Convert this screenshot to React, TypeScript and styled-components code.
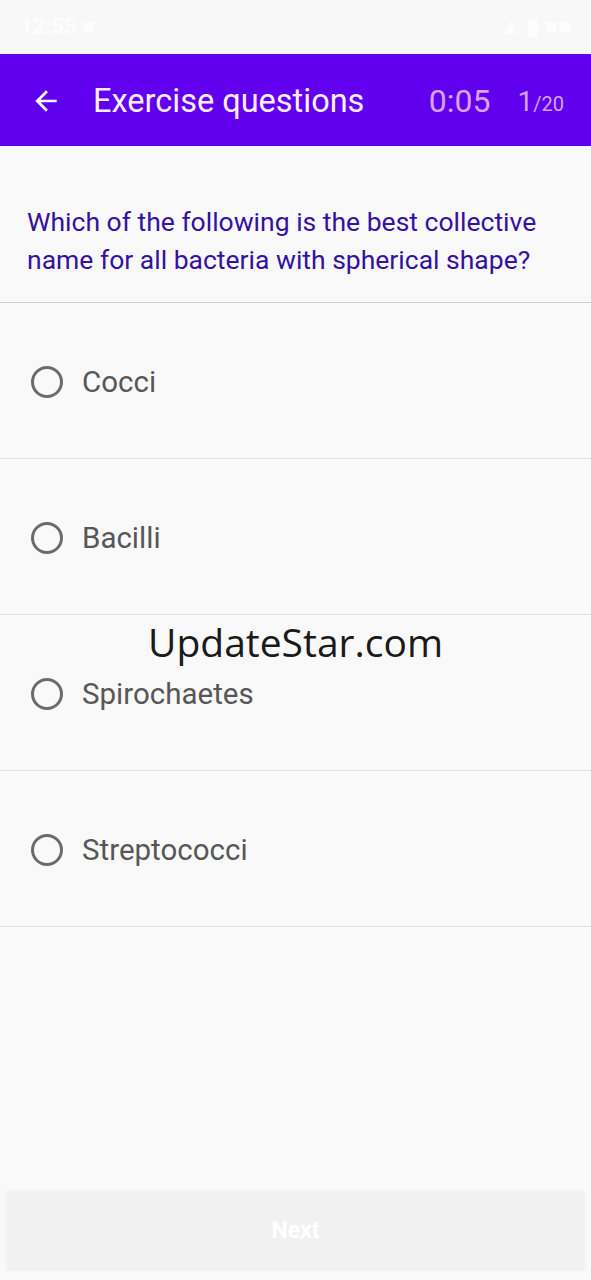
import styled, { createGlobalStyle } from "styled-components";

const GlobalStyle = createGlobalStyle`
  html, body {
    margin: 0;
    padding: 0;
    background: #f9f9f9;
  }
  * {
    box-sizing: border-box;
  }
`;

const Screen = styled.div`
  position: relative;
  display: flex;
  flex-direction: column;
  width: 591px;
  height: 1280px;
  background: #f9f9f9;
  font-family: Roboto, "Noto Sans", sans-serif;
`;

const StatusBar = styled.div`
  height: 54px;
  padding: 0 20px;
  display: flex;
  align-items: center;
  justify-content: space-between;
  color: #fdfdfd;
  font-size: 22px;
  font-weight: 700;
  background: #f8f8f8;
`;

const AppBar = styled.div`
  height: 92px;
  display: flex;
  align-items: center;
  padding: 2px 27px 0 29px;
  background: #6000ee;
`;

const BackButton = styled.div`
  width: 34px;
  height: 34px;
  display: flex;
  align-items: center;
  justify-content: center;
  margin-right: 30px;
`;

const Title = styled.div`
  flex: 1;
  color: #fdeefc;
  font-size: 32.5px;
`;

const Timer = styled.div`
  color: #d8a2ef;
  font-size: 32px;
  margin-right: 27px;
`;

const Counter = styled.div`
  color: #d8a2ef;
  font-size: 28px;
`;

const CounterTotal = styled.span`
  font-size: 20px;
`;

const Question = styled.div`
  padding: 57px 27px 23px;
  color: #3511a2;
  font-size: 26.5px;
  line-height: 38px;
  border-bottom: 1px solid #cfcfcf;
`;

const OptionList = styled.div`
  flex: 1;
`;

const OptionRow = styled.div`
  height: 156px;
  display: flex;
  align-items: center;
  padding: 3px 0 0 31px;
  border-bottom: 1px solid #e2e2e2;
`;

const Radio = styled.div`
  width: 32px;
  height: 32px;
  border: 3px solid #6b6b6b;
  border-radius: 50%;
  margin-right: 19px;
`;

const OptionLabel = styled.div`
  color: #575757;
  font-size: 29.5px;
`;

const NextButton = styled.div`
  margin: 0 7px 10px;
  height: 79px;
  display: flex;
  align-items: center;
  justify-content: center;
  background: #f1f1f1;
  color: #ffffff;
  font-size: 23px;
  font-weight: 700;
  box-shadow: 0 0 3px rgba(0, 0, 0, 0.05);
`;

const Watermark = styled.div`
  position: absolute;
  top: 615px;
  left: 0;
  right: 0;
  text-align: center;
  color: #1a1a1a;
  font-family: "Open Sans", "Noto Sans", sans-serif;
  font-size: 39px;
`;

const options = ["Cocci", "Bacilli", "Spirochaetes", "Streptococci"];

export default function App() {
  return (
    <Screen>
      <GlobalStyle />
      <StatusBar>
        <span>12:55 ■</span>
        <span>▲ ▮ ■■</span>
      </StatusBar>
      <AppBar>
        <BackButton>
          <svg width="32" height="32" viewBox="0 0 24 24" fill="#ffffff">
            <path d="M20 11H7.83l5.59-5.59L12 4l-8 8 8 8 1.41-1.41L7.83 13H20v-2z" />
          </svg>
        </BackButton>
        <Title>Exercise questions</Title>
        <Timer>0:05</Timer>
        <Counter>
          1<CounterTotal>/20</CounterTotal>
        </Counter>
      </AppBar>
      <Question>
        Which of the following is the best collective name for all bacteria with spherical shape?
      </Question>
      <OptionList>
        {options.map((o) => (
          <OptionRow key={o}>
            <Radio />
            <OptionLabel>{o}</OptionLabel>
          </OptionRow>
        ))}
      </OptionList>
      <NextButton>Next</NextButton>
      <Watermark>UpdateStar.com</Watermark>
    </Screen>
  );
}
